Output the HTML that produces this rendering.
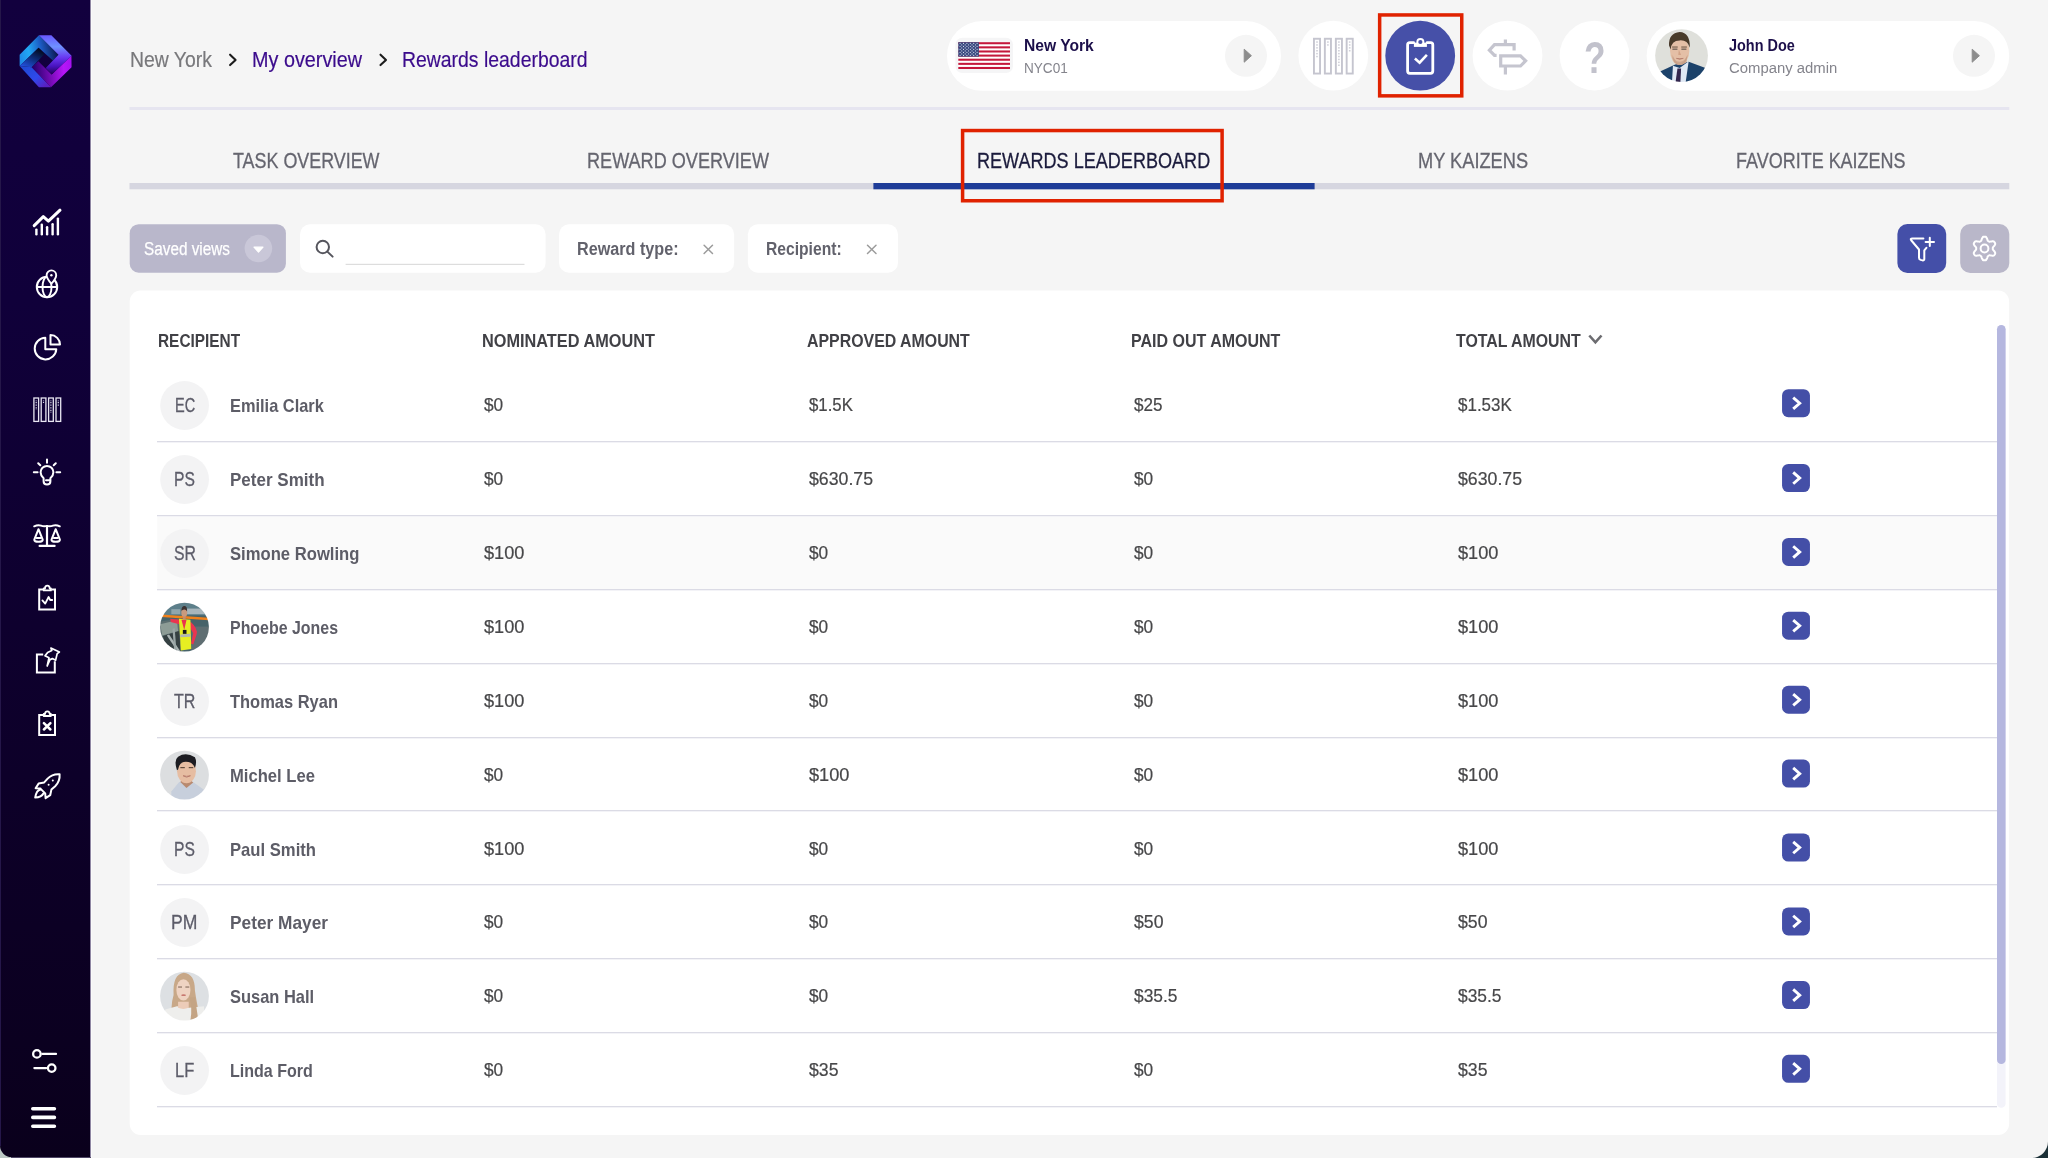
<!DOCTYPE html>
<html lang="en">
<head>
<meta charset="utf-8">
<title>Rewards leaderboard</title>
<style>
html,body{margin:0;padding:0;background:#f5f5f5;}
body{width:2048px;height:1158px;overflow:hidden;font-family:"Liberation Sans",sans-serif;}
#app{position:relative;width:2048px;height:1158px;overflow:hidden;background:#f5f5f5;}
#app div{position:absolute;box-sizing:border-box;}
.t{white-space:nowrap;line-height:1;transform-origin:0 0;}
.sep{left:157px;width:1840px;height:2px;background:linear-gradient(#dbdbe5 0,#dbdbe5 50%,#f3f3f7 50%,#f3f3f7 100%);}
svg{position:absolute;left:0;top:0;overflow:visible;}
</style>
</head>
<body>
<div id="app">
<div style="left:0.0px;top:0.0px;width:90.0px;height:1158.0px;background:linear-gradient(180deg,#12003e 0%,#10003a 26%,#0e002e 54%,#0c0024 80%,#0a001c 100%);"></div>
<svg width="2048" height="1158" viewBox="0 0 2048 1158">
<rect x="90.00" y="0.00" width="1.00" height="1158.00" fill="#8f87a3"/>
<rect x="91.00" y="0.00" width="1.00" height="1158.00" fill="#fbfbfb"/>
<rect x="0.00" y="0.00" width="1.00" height="1146.00" fill="#251749"/>
<rect x="129.50" y="107.00" width="1879.80" height="3.00" fill="#e6e5f0"/>
<rect x="947.00" y="21.00" width="334.00" height="69.80" rx="35" fill="#fff"/>
<rect x="955.40" y="37.80" width="57.60" height="35.20" rx="7" fill="#f5f5f6"/>
<circle cx="1246.00" cy="55.80" r="21.00" fill="#f5f5f5"/>
<circle cx="1333.30" cy="55.70" r="34.90" fill="#fff"/>
<circle cx="1420.20" cy="55.70" r="34.90" fill="#4650a8"/>
<circle cx="1507.50" cy="55.70" r="34.90" fill="#fff"/>
<circle cx="1594.50" cy="55.60" r="34.90" fill="#fff"/>
<rect x="1646.60" y="21.00" width="362.60" height="69.80" rx="35" fill="#fff"/>
<circle cx="1974.00" cy="55.80" r="21.00" fill="#f5f5f5"/>
<rect x="129.50" y="183.00" width="1879.80" height="6.30" fill="#d6d6e0"/>
<rect x="873.40" y="183.00" width="441.20" height="6.30" fill="#1e3c98"/>
<rect x="129.70" y="224.20" width="156.20" height="48.50" rx="9" fill="#b9b7cb"/>
<circle cx="258.40" cy="248.50" r="13.80" fill="#c9c7d8"/>
<rect x="300.00" y="224.20" width="245.60" height="48.50" rx="10" fill="#fff"/>
<rect x="345.60" y="263.80" width="178.90" height="1.10" fill="#dadada"/>
<rect x="559.00" y="224.20" width="175.10" height="48.50" rx="10" fill="#fff"/>
<rect x="747.90" y="224.20" width="150.10" height="48.50" rx="10" fill="#fff"/>
<rect x="1897.40" y="224.00" width="48.80" height="49.00" rx="10" fill="#444fa8"/>
<rect x="1960.20" y="224.00" width="49.10" height="49.00" rx="10" fill="#b9b7c9"/>
<rect x="129.70" y="290.60" width="1879.40" height="844.40" rx="11" fill="#fff"/>
<rect x="157.30" y="515.92" width="1839.70" height="73.12" fill="#fafafa"/>
<circle cx="184.60" cy="405.50" r="24.40" fill="#f3f3f4"/>
<circle cx="184.60" cy="479.50" r="24.40" fill="#f3f3f4"/>
<circle cx="184.60" cy="553.50" r="24.40" fill="#f3f3f4"/>
<circle cx="184.60" cy="701.50" r="24.40" fill="#f3f3f4"/>
<circle cx="184.60" cy="849.50" r="24.40" fill="#f3f3f4"/>
<circle cx="184.60" cy="922.50" r="24.40" fill="#f3f3f4"/>
<circle cx="184.60" cy="1070.50" r="24.40" fill="#f3f3f4"/>
<rect x="1997.00" y="325.00" width="8.60" height="782.80" rx="4.3" fill="#f3f3fa"/>
<rect x="1997.00" y="325.00" width="8.60" height="739.00" rx="4.3" fill="#b5b7df"/>
</svg>
<div class="sep" style="top:441px"></div>
<div class="sep" style="top:515px"></div>
<div class="sep" style="top:589px"></div>
<div class="sep" style="top:663px"></div>
<div class="sep" style="top:737px"></div>
<div class="sep" style="top:810px"></div>
<div class="sep" style="top:884px"></div>
<div class="sep" style="top:958px"></div>
<div class="sep" style="top:1032px"></div>
<div class="sep" style="top:1106px"></div>
<div class="t" style="left:130.3px;top:48.6px;font-size:22px;color:#78787b;-webkit-text-stroke:0.2px;transform:scaleX(0.8822);">New York</div>
<div class="t" style="left:251.8px;top:48.6px;font-size:22px;color:#3b0b8c;-webkit-text-stroke:0.2px;transform:scaleX(0.8998);">My overview</div>
<div class="t" style="left:402.0px;top:48.6px;font-size:22px;color:#3b0b8c;-webkit-text-stroke:0.2px;transform:scaleX(0.8819);">Rewards leaderboard</div>
<div class="t" style="left:1023.7px;top:36.7px;font-size:17px;color:#1c0f4a;font-weight:700;transform:scaleX(0.9196);">New York</div>
<div class="t" style="left:1023.7px;top:60.0px;font-size:15.4px;color:#84848c;transform:scaleX(0.8826);">NYC01</div>
<div class="t" style="left:1729.0px;top:36.7px;font-size:17px;color:#1c0f4a;font-weight:700;transform:scaleX(0.8495);">John Doe</div>
<div class="t" style="left:1729.0px;top:60.0px;font-size:15.4px;color:#84848c;transform:scaleX(0.9663);">Company admin</div>
<div class="t" style="left:1584.3px;top:35.8px;font-size:44px;color:#c2c2cc;font-weight:700;transform:scaleX(0.7995);">?</div>
<div class="t" style="left:233.1px;top:150.1px;font-size:22px;color:#65656f;-webkit-text-stroke:0.3px;transform:scaleX(0.8133);">TASK OVERVIEW</div>
<div class="t" style="left:587.3px;top:150.1px;font-size:22px;color:#65656f;-webkit-text-stroke:0.3px;transform:scaleX(0.8226);">REWARD OVERVIEW</div>
<div class="t" style="left:977.2px;top:150.1px;font-size:22px;color:#1b1b3c;-webkit-text-stroke:0.3px;transform:scaleX(0.8211);">REWARDS LEADERBOARD</div>
<div class="t" style="left:1418.1px;top:150.1px;font-size:22px;color:#65656f;-webkit-text-stroke:0.3px;transform:scaleX(0.8287);">MY KAIZENS</div>
<div class="t" style="left:1735.7px;top:150.1px;font-size:22px;color:#65656f;-webkit-text-stroke:0.3px;transform:scaleX(0.8177);">FAVORITE KAIZENS</div>
<div class="t" style="left:143.6px;top:240.0px;font-size:18px;color:#fff;-webkit-text-stroke:0.25px;transform:scaleX(0.8510);">Saved views</div>
<div class="t" style="left:576.9px;top:240.2px;font-size:18px;color:#62626c;font-weight:700;transform:scaleX(0.8989);">Reward type:</div>
<div class="t" style="left:765.6px;top:240.2px;font-size:18px;color:#62626c;font-weight:700;transform:scaleX(0.8688);">Recipient:</div>
<div class="t" style="left:158.4px;top:331.7px;font-size:18.4px;color:#414146;font-weight:700;transform:scaleX(0.8368);">RECIPIENT</div>
<div class="t" style="left:481.6px;top:331.7px;font-size:18.4px;color:#414146;font-weight:700;transform:scaleX(0.8861);">NOMINATED AMOUNT</div>
<div class="t" style="left:807.0px;top:331.7px;font-size:18.4px;color:#414146;font-weight:700;transform:scaleX(0.8644);">APPROVED AMOUNT</div>
<div class="t" style="left:1131.4px;top:331.7px;font-size:18.4px;color:#414146;font-weight:700;transform:scaleX(0.8704);">PAID OUT AMOUNT</div>
<div class="t" style="left:1456.3px;top:331.7px;font-size:18.4px;color:#414146;font-weight:700;transform:scaleX(0.8636);">TOTAL AMOUNT</div>
<div class="t" style="left:174.50px;top:395.0px;font-size:20.2px;color:#5c5c69;-webkit-text-stroke:0.3px;transform:scaleX(0.7194);">EC</div>
<div class="t" style="left:230.2px;top:397.0px;font-size:18.4px;color:#5d5d67;font-weight:700;transform:scaleX(0.8908);">Emilia Clark</div>
<div class="t" style="left:484.0px;top:396.0px;font-size:18.4px;color:#474749;-webkit-text-stroke:0.2px;transform:scaleX(0.9380);">$0</div>
<div class="t" style="left:808.6px;top:396.0px;font-size:18.4px;color:#474749;-webkit-text-stroke:0.2px;transform:scaleX(0.9134);">$1.5K</div>
<div class="t" style="left:1133.5px;top:396.0px;font-size:18.4px;color:#474749;-webkit-text-stroke:0.2px;transform:scaleX(0.9287);">$25</div>
<div class="t" style="left:1457.9px;top:396.0px;font-size:18.4px;color:#474749;-webkit-text-stroke:0.2px;transform:scaleX(0.9229);">$1.53K</div>
<div class="t" style="left:174.15px;top:469.0px;font-size:20.2px;color:#5c5c69;-webkit-text-stroke:0.3px;transform:scaleX(0.7750);">PS</div>
<div class="t" style="left:230.2px;top:471.0px;font-size:18.4px;color:#5d5d67;font-weight:700;transform:scaleX(0.9256);">Peter Smith</div>
<div class="t" style="left:484.0px;top:470.0px;font-size:18.4px;color:#474749;-webkit-text-stroke:0.2px;transform:scaleX(0.9380);">$0</div>
<div class="t" style="left:808.6px;top:470.0px;font-size:18.4px;color:#474749;-webkit-text-stroke:0.2px;transform:scaleX(0.9626);">$630.75</div>
<div class="t" style="left:1133.5px;top:470.0px;font-size:18.4px;color:#474749;-webkit-text-stroke:0.2px;transform:scaleX(0.9380);">$0</div>
<div class="t" style="left:1457.9px;top:470.0px;font-size:18.4px;color:#474749;-webkit-text-stroke:0.2px;transform:scaleX(0.9626);">$630.75</div>
<div class="t" style="left:173.60px;top:543.0px;font-size:20.2px;color:#5c5c69;-webkit-text-stroke:0.3px;transform:scaleX(0.7835);">SR</div>
<div class="t" style="left:230.2px;top:545.0px;font-size:18.4px;color:#5d5d67;font-weight:700;transform:scaleX(0.9046);">Simone Rowling</div>
<div class="t" style="left:484.0px;top:544.0px;font-size:18.4px;color:#474749;-webkit-text-stroke:0.2px;transform:scaleX(0.9897);">$100</div>
<div class="t" style="left:808.6px;top:544.0px;font-size:18.4px;color:#474749;-webkit-text-stroke:0.2px;transform:scaleX(0.9380);">$0</div>
<div class="t" style="left:1133.5px;top:544.0px;font-size:18.4px;color:#474749;-webkit-text-stroke:0.2px;transform:scaleX(0.9380);">$0</div>
<div class="t" style="left:1457.9px;top:544.0px;font-size:18.4px;color:#474749;-webkit-text-stroke:0.2px;transform:scaleX(0.9897);">$100</div>
<div class="t" style="left:230.2px;top:619.0px;font-size:18.4px;color:#5d5d67;font-weight:700;transform:scaleX(0.8662);">Phoebe Jones</div>
<div class="t" style="left:484.0px;top:618.0px;font-size:18.4px;color:#474749;-webkit-text-stroke:0.2px;transform:scaleX(0.9897);">$100</div>
<div class="t" style="left:808.6px;top:618.0px;font-size:18.4px;color:#474749;-webkit-text-stroke:0.2px;transform:scaleX(0.9380);">$0</div>
<div class="t" style="left:1133.5px;top:618.0px;font-size:18.4px;color:#474749;-webkit-text-stroke:0.2px;transform:scaleX(0.9380);">$0</div>
<div class="t" style="left:1457.9px;top:618.0px;font-size:18.4px;color:#474749;-webkit-text-stroke:0.2px;transform:scaleX(0.9897);">$100</div>
<div class="t" style="left:173.90px;top:691.0px;font-size:20.2px;color:#5c5c69;-webkit-text-stroke:0.3px;transform:scaleX(0.7936);">TR</div>
<div class="t" style="left:230.2px;top:693.0px;font-size:18.4px;color:#5d5d67;font-weight:700;transform:scaleX(0.8956);">Thomas Ryan</div>
<div class="t" style="left:484.0px;top:692.0px;font-size:18.4px;color:#474749;-webkit-text-stroke:0.2px;transform:scaleX(0.9897);">$100</div>
<div class="t" style="left:808.6px;top:692.0px;font-size:18.4px;color:#474749;-webkit-text-stroke:0.2px;transform:scaleX(0.9380);">$0</div>
<div class="t" style="left:1133.5px;top:692.0px;font-size:18.4px;color:#474749;-webkit-text-stroke:0.2px;transform:scaleX(0.9380);">$0</div>
<div class="t" style="left:1457.9px;top:692.0px;font-size:18.4px;color:#474749;-webkit-text-stroke:0.2px;transform:scaleX(0.9897);">$100</div>
<div class="t" style="left:230.2px;top:767.0px;font-size:18.4px;color:#5d5d67;font-weight:700;transform:scaleX(0.9029);">Michel Lee</div>
<div class="t" style="left:484.0px;top:766.0px;font-size:18.4px;color:#474749;-webkit-text-stroke:0.2px;transform:scaleX(0.9380);">$0</div>
<div class="t" style="left:808.6px;top:766.0px;font-size:18.4px;color:#474749;-webkit-text-stroke:0.2px;transform:scaleX(0.9897);">$100</div>
<div class="t" style="left:1133.5px;top:766.0px;font-size:18.4px;color:#474749;-webkit-text-stroke:0.2px;transform:scaleX(0.9380);">$0</div>
<div class="t" style="left:1457.9px;top:766.0px;font-size:18.4px;color:#474749;-webkit-text-stroke:0.2px;transform:scaleX(0.9897);">$100</div>
<div class="t" style="left:174.15px;top:839.0px;font-size:20.2px;color:#5c5c69;-webkit-text-stroke:0.3px;transform:scaleX(0.7750);">PS</div>
<div class="t" style="left:230.2px;top:841.0px;font-size:18.4px;color:#5d5d67;font-weight:700;transform:scaleX(0.9048);">Paul Smith</div>
<div class="t" style="left:484.0px;top:840.0px;font-size:18.4px;color:#474749;-webkit-text-stroke:0.2px;transform:scaleX(0.9897);">$100</div>
<div class="t" style="left:808.6px;top:840.0px;font-size:18.4px;color:#474749;-webkit-text-stroke:0.2px;transform:scaleX(0.9380);">$0</div>
<div class="t" style="left:1133.5px;top:840.0px;font-size:18.4px;color:#474749;-webkit-text-stroke:0.2px;transform:scaleX(0.9380);">$0</div>
<div class="t" style="left:1457.9px;top:840.0px;font-size:18.4px;color:#474749;-webkit-text-stroke:0.2px;transform:scaleX(0.9897);">$100</div>
<div class="t" style="left:171.40px;top:912.0px;font-size:20.2px;color:#5c5c69;-webkit-text-stroke:0.3px;transform:scaleX(0.8713);">PM</div>
<div class="t" style="left:230.2px;top:914.0px;font-size:18.4px;color:#5d5d67;font-weight:700;transform:scaleX(0.9398);">Peter Mayer</div>
<div class="t" style="left:484.0px;top:913.0px;font-size:18.4px;color:#474749;-webkit-text-stroke:0.2px;transform:scaleX(0.9380);">$0</div>
<div class="t" style="left:808.6px;top:913.0px;font-size:18.4px;color:#474749;-webkit-text-stroke:0.2px;transform:scaleX(0.9380);">$0</div>
<div class="t" style="left:1133.5px;top:913.0px;font-size:18.4px;color:#474749;-webkit-text-stroke:0.2px;transform:scaleX(0.9613);">$50</div>
<div class="t" style="left:1457.9px;top:913.0px;font-size:18.4px;color:#474749;-webkit-text-stroke:0.2px;transform:scaleX(0.9613);">$50</div>
<div class="t" style="left:230.2px;top:988.0px;font-size:18.4px;color:#5d5d67;font-weight:700;transform:scaleX(0.8944);">Susan Hall</div>
<div class="t" style="left:484.0px;top:987.0px;font-size:18.4px;color:#474749;-webkit-text-stroke:0.2px;transform:scaleX(0.9380);">$0</div>
<div class="t" style="left:808.6px;top:987.0px;font-size:18.4px;color:#474749;-webkit-text-stroke:0.2px;transform:scaleX(0.9380);">$0</div>
<div class="t" style="left:1133.5px;top:987.0px;font-size:18.4px;color:#474749;-webkit-text-stroke:0.2px;transform:scaleX(0.9450);">$35.5</div>
<div class="t" style="left:1457.9px;top:987.0px;font-size:18.4px;color:#474749;-webkit-text-stroke:0.2px;transform:scaleX(0.9450);">$35.5</div>
<div class="t" style="left:175.00px;top:1060.0px;font-size:20.2px;color:#5c5c69;-webkit-text-stroke:0.3px;transform:scaleX(0.8159);">LF</div>
<div class="t" style="left:230.2px;top:1062.0px;font-size:18.4px;color:#5d5d67;font-weight:700;transform:scaleX(0.8725);">Linda Ford</div>
<div class="t" style="left:484.0px;top:1061.0px;font-size:18.4px;color:#474749;-webkit-text-stroke:0.2px;transform:scaleX(0.9380);">$0</div>
<div class="t" style="left:808.6px;top:1061.0px;font-size:18.4px;color:#474749;-webkit-text-stroke:0.2px;transform:scaleX(0.9613);">$35</div>
<div class="t" style="left:1133.5px;top:1061.0px;font-size:18.4px;color:#474749;-webkit-text-stroke:0.2px;transform:scaleX(0.9380);">$0</div>
<div class="t" style="left:1457.9px;top:1061.0px;font-size:18.4px;color:#474749;-webkit-text-stroke:0.2px;transform:scaleX(0.9613);">$35</div>
<svg width="2048" height="1158" viewBox="0 0 2048 1158">
<defs>
<linearGradient id="g1" gradientUnits="userSpaceOnUse" x1="155" y1="600" x2="780" y2="470"><stop offset="0" stop-color="#1e86e6"/><stop offset=".28" stop-color="#22a8f4"/><stop offset=".6" stop-color="#1c5cc4"/><stop offset="1" stop-color="#0a1248"/></linearGradient>
<linearGradient id="g2" gradientUnits="userSpaceOnUse" x1="470" y1="370" x2="300" y2="700"><stop offset="0" stop-color="#010614"/><stop offset=".55" stop-color="#0e2e7e"/><stop offset="1" stop-color="#204ed6"/></linearGradient>
<linearGradient id="g3" gradientUnits="userSpaceOnUse" x1="250" y1="660" x2="560" y2="1000"><stop offset="0" stop-color="#1f4ad4"/><stop offset=".55" stop-color="#3049ec"/><stop offset="1" stop-color="#5a1fc0"/></linearGradient>
<linearGradient id="g4" gradientUnits="userSpaceOnUse" x1="380" y1="690" x2="990" y2="620"><stop offset="0" stop-color="#2a0070"/><stop offset=".45" stop-color="#7d0cbc"/><stop offset=".78" stop-color="#b716f8"/><stop offset="1" stop-color="#a512f0"/></linearGradient>
<linearGradient id="g5" gradientUnits="userSpaceOnUse" x1="640" y1="165" x2="660" y2="790"><stop offset="0" stop-color="#6858ff"/><stop offset=".3" stop-color="#6f92ff"/><stop offset=".58" stop-color="#6a38f2"/><stop offset=".8" stop-color="#4812be"/><stop offset="1" stop-color="#230058"/></linearGradient>
</defs>
<g transform="translate(10 25) scale(0.062177)">
<polygon points="155,480 465,165 780,480 690,570 460,365 155,660" fill="url(#g1)"/>
<polygon points="155,660 460,365 555,465 350,680" fill="url(#g2)"/>
<polygon points="155,660 350,680 660,1000 465,1000" fill="url(#g3)"/>
<polygon points="350,680 455,585 670,795 988,495 990,680 660,1000" fill="url(#g4)"/>
<polygon points="465,165 665,165 990,495 670,795 575,690 780,480" fill="url(#g5)"/>
</g>
<path d="M230.1 54.7L235.6 59.9L230.1 65.1" fill="none" stroke="#1c1c1c" stroke-width="2.1" stroke-linecap="round" stroke-linejoin="round"/>
<path d="M380.5 54.7L386 59.9L380.5 65.1" fill="none" stroke="#1c1c1c" stroke-width="2.1" stroke-linecap="round" stroke-linejoin="round"/>
<g><rect x="958.3" y="42.2" width="51.7" height="26.8" fill="#fff"/><rect x="958.3" y="42.20" width="51.7" height="2.06" fill="#c4183c"/><rect x="958.3" y="46.32" width="51.7" height="2.06" fill="#c4183c"/><rect x="958.3" y="50.45" width="51.7" height="2.06" fill="#c4183c"/><rect x="958.3" y="54.57" width="51.7" height="2.06" fill="#c4183c"/><rect x="958.3" y="58.69" width="51.7" height="2.06" fill="#c4183c"/><rect x="958.3" y="62.82" width="51.7" height="2.06" fill="#c4183c"/><rect x="958.3" y="66.94" width="51.7" height="2.06" fill="#c4183c"/><rect x="958.3" y="42.2" width="20.6" height="14.43" fill="#3a4a80"/><circle cx="960.10" cy="43.40" r="0.55" fill="#d5dbea"/><circle cx="963.50" cy="43.40" r="0.55" fill="#d5dbea"/><circle cx="966.90" cy="43.40" r="0.55" fill="#d5dbea"/><circle cx="970.30" cy="43.40" r="0.55" fill="#d5dbea"/><circle cx="973.70" cy="43.40" r="0.55" fill="#d5dbea"/><circle cx="977.10" cy="43.40" r="0.55" fill="#d5dbea"/><circle cx="961.80" cy="44.90" r="0.55" fill="#d5dbea"/><circle cx="965.20" cy="44.90" r="0.55" fill="#d5dbea"/><circle cx="968.60" cy="44.90" r="0.55" fill="#d5dbea"/><circle cx="972.00" cy="44.90" r="0.55" fill="#d5dbea"/><circle cx="975.40" cy="44.90" r="0.55" fill="#d5dbea"/><circle cx="960.10" cy="46.40" r="0.55" fill="#d5dbea"/><circle cx="963.50" cy="46.40" r="0.55" fill="#d5dbea"/><circle cx="966.90" cy="46.40" r="0.55" fill="#d5dbea"/><circle cx="970.30" cy="46.40" r="0.55" fill="#d5dbea"/><circle cx="973.70" cy="46.40" r="0.55" fill="#d5dbea"/><circle cx="977.10" cy="46.40" r="0.55" fill="#d5dbea"/><circle cx="961.80" cy="47.90" r="0.55" fill="#d5dbea"/><circle cx="965.20" cy="47.90" r="0.55" fill="#d5dbea"/><circle cx="968.60" cy="47.90" r="0.55" fill="#d5dbea"/><circle cx="972.00" cy="47.90" r="0.55" fill="#d5dbea"/><circle cx="975.40" cy="47.90" r="0.55" fill="#d5dbea"/><circle cx="960.10" cy="49.40" r="0.55" fill="#d5dbea"/><circle cx="963.50" cy="49.40" r="0.55" fill="#d5dbea"/><circle cx="966.90" cy="49.40" r="0.55" fill="#d5dbea"/><circle cx="970.30" cy="49.40" r="0.55" fill="#d5dbea"/><circle cx="973.70" cy="49.40" r="0.55" fill="#d5dbea"/><circle cx="977.10" cy="49.40" r="0.55" fill="#d5dbea"/><circle cx="961.80" cy="50.90" r="0.55" fill="#d5dbea"/><circle cx="965.20" cy="50.90" r="0.55" fill="#d5dbea"/><circle cx="968.60" cy="50.90" r="0.55" fill="#d5dbea"/><circle cx="972.00" cy="50.90" r="0.55" fill="#d5dbea"/><circle cx="975.40" cy="50.90" r="0.55" fill="#d5dbea"/><circle cx="960.10" cy="52.40" r="0.55" fill="#d5dbea"/><circle cx="963.50" cy="52.40" r="0.55" fill="#d5dbea"/><circle cx="966.90" cy="52.40" r="0.55" fill="#d5dbea"/><circle cx="970.30" cy="52.40" r="0.55" fill="#d5dbea"/><circle cx="973.70" cy="52.40" r="0.55" fill="#d5dbea"/><circle cx="977.10" cy="52.40" r="0.55" fill="#d5dbea"/><circle cx="961.80" cy="53.90" r="0.55" fill="#d5dbea"/><circle cx="965.20" cy="53.90" r="0.55" fill="#d5dbea"/><circle cx="968.60" cy="53.90" r="0.55" fill="#d5dbea"/><circle cx="972.00" cy="53.90" r="0.55" fill="#d5dbea"/><circle cx="975.40" cy="53.90" r="0.55" fill="#d5dbea"/><circle cx="960.10" cy="55.40" r="0.55" fill="#d5dbea"/><circle cx="963.50" cy="55.40" r="0.55" fill="#d5dbea"/><circle cx="966.90" cy="55.40" r="0.55" fill="#d5dbea"/><circle cx="970.30" cy="55.40" r="0.55" fill="#d5dbea"/><circle cx="973.70" cy="55.40" r="0.55" fill="#d5dbea"/><circle cx="977.10" cy="55.40" r="0.55" fill="#d5dbea"/></g>
<path d="M1244.2 49.2L1251.4 55.7L1244.2 62.2Z" fill="#8d8d8d" stroke="#8d8d8d" stroke-width="1" stroke-linejoin="round"/>
<path d="M1972.2 49.2L1979.4 55.7L1972.2 62.2Z" fill="#8d8d8d" stroke="#8d8d8d" stroke-width="1" stroke-linejoin="round"/>
<rect x="1313.95" y="38.75" width="6.1" height="34.8" fill="none" stroke="#c5c5cf" stroke-width="1.9"/>
<rect x="1324.85" y="38.75" width="6.1" height="34.8" fill="none" stroke="#c5c5cf" stroke-width="1.9"/>
<rect x="1335.85" y="38.75" width="6.1" height="34.8" fill="none" stroke="#c5c5cf" stroke-width="1.9"/>
<rect x="1346.65" y="38.75" width="6.1" height="34.8" fill="none" stroke="#c5c5cf" stroke-width="1.9"/>
<rect x="1316.20" y="41.30" width="1.6" height="1.5" fill="#cfcfd8"/>
<rect x="1316.20" y="44.20" width="1.6" height="1.5" fill="#cfcfd8"/>
<rect x="1316.20" y="47.10" width="1.6" height="1.5" fill="#cfcfd8"/>
<rect x="1316.20" y="50.00" width="1.6" height="1.5" fill="#cfcfd8"/>
<rect x="1316.20" y="52.90" width="1.6" height="1.5" fill="#cfcfd8"/>
<rect x="1316.20" y="55.80" width="1.6" height="1.5" fill="#cfcfd8"/>
<rect x="1327.10" y="41.30" width="1.6" height="1.5" fill="#cfcfd8"/>
<rect x="1327.10" y="44.20" width="1.6" height="1.5" fill="#cfcfd8"/>
<rect x="1338.10" y="41.30" width="1.6" height="1.5" fill="#cfcfd8"/>
<rect x="1338.10" y="44.20" width="1.6" height="1.5" fill="#cfcfd8"/>
<rect x="1338.10" y="47.10" width="1.6" height="1.5" fill="#cfcfd8"/>
<rect x="1338.10" y="50.00" width="1.6" height="1.5" fill="#cfcfd8"/>
<rect x="1338.10" y="52.90" width="1.6" height="1.5" fill="#cfcfd8"/>
<rect x="1338.10" y="55.80" width="1.6" height="1.5" fill="#cfcfd8"/>
<rect x="1338.10" y="58.70" width="1.6" height="1.5" fill="#cfcfd8"/>
<rect x="1338.10" y="61.60" width="1.6" height="1.5" fill="#cfcfd8"/>
<rect x="1338.10" y="64.50" width="1.6" height="1.5" fill="#cfcfd8"/>
<rect x="1348.90" y="41.30" width="1.6" height="1.5" fill="#cfcfd8"/>
<rect x="1348.90" y="44.20" width="1.6" height="1.5" fill="#cfcfd8"/>
<rect x="1348.90" y="47.10" width="1.6" height="1.5" fill="#cfcfd8"/>
<rect x="1348.90" y="50.00" width="1.6" height="1.5" fill="#cfcfd8"/>
<path d="M1413.6 42.6H1409.8Q1407.6 42.6 1407.6 44.8V71.1Q1407.6 73.3 1409.8 73.3H1430.6Q1432.8 73.3 1432.8 71.1V44.8Q1432.8 42.6 1430.6 42.6H1427.2" fill="none" stroke="#fff" stroke-width="2.8" stroke-linecap="round" stroke-linejoin="round"/>
<rect x="1413.9" y="42.6" width="13" height="4.3" fill="#fff"/>
<circle cx="1420.35" cy="42" r="4" fill="#fff"/>
<circle cx="1420.35" cy="42" r="2.1" fill="#4650a8"/>
<path d="M1414.9 58.6L1419.6 62.7L1426.9 54.9" fill="none" stroke="#fff" stroke-width="2.6" stroke-linecap="butt" stroke-linejoin="miter"/>
<path d="M1505.4 39.4V43.6 M1514.1 50.6V44.6H1494.5L1489.4 50.2L1494.5 55.3H1496.6 M1500.7 55.9H1520.5L1525.6 60.8L1520.5 66H1500.7Z M1505.4 67.6V74.6" fill="none" stroke="#c5c5cf" stroke-width="3.2" stroke-linecap="butt" stroke-linejoin="miter"/>
<path d="M254 247.2H263L258.5 252Z" fill="#fff" stroke="#fff" stroke-width="1.2" stroke-linejoin="round"/>
<circle cx="322.8" cy="247" r="6.2" fill="none" stroke="#55555d" stroke-width="2"/>
<path d="M327.4 251.6L332.6 256.6" fill="none" stroke="#55555d" stroke-width="2" stroke-linecap="round" stroke-linejoin="round"/>
<path d="M704.1 245.3L712.5 253.5M712.5 245.3L704.1 253.5" fill="none" stroke="#9b9b9b" stroke-width="1.5" stroke-linecap="round" stroke-linejoin="round"/>
<path d="M867.5 245.3L876 253.5M876 245.3L867.5 253.5" fill="none" stroke="#9b9b9b" stroke-width="1.5" stroke-linecap="round" stroke-linejoin="round"/>
<path d="M1923.4 238.4H1912.4Q1909.8 238.4 1911.4 240.5L1919 249.5V257.8Q1919 259.4 1920.6 259.9L1922.6 260.4Q1924.3 260.6 1924.3 258.9V250.4L1926.4 247.8" fill="none" stroke="#fff" stroke-width="2" stroke-linecap="round" stroke-linejoin="round"/>
<path d="M1925.6 241.9H1934 M1929.8 237.8V246.1" fill="none" stroke="#fff" stroke-width="2" stroke-linecap="round" stroke-linejoin="round"/>
<path d="M1984.50 236.70L1985.01 236.71L1985.53 236.74L1986.01 237.00L1986.44 237.53L1986.80 238.14L1987.10 238.79L1987.35 239.46L1987.56 240.08L1987.75 240.64L1988.01 240.98L1988.33 241.14L1988.65 241.31L1988.96 241.50L1989.26 241.70L1989.68 241.75L1990.26 241.64L1990.91 241.51L1991.61 241.39L1992.33 241.33L1993.04 241.34L1993.70 241.44L1994.17 241.73L1994.45 242.16L1994.72 242.60L1994.97 243.05L1995.19 243.51L1995.21 244.06L1994.97 244.69L1994.62 245.31L1994.21 245.90L1993.76 246.45L1993.32 246.94L1992.93 247.39L1992.77 247.78L1992.79 248.14L1992.80 248.50L1992.79 248.86L1992.77 249.22L1992.93 249.61L1993.32 250.06L1993.76 250.55L1994.21 251.10L1994.62 251.69L1994.97 252.31L1995.21 252.94L1995.19 253.49L1994.97 253.95L1994.72 254.40L1994.45 254.84L1994.17 255.27L1993.70 255.56L1993.04 255.66L1992.33 255.67L1991.61 255.61L1990.91 255.49L1990.26 255.36L1989.68 255.25L1989.26 255.30L1988.96 255.50L1988.65 255.69L1988.33 255.86L1988.01 256.02L1987.75 256.36L1987.56 256.92L1987.35 257.54L1987.10 258.21L1986.80 258.86L1986.44 259.47L1986.01 260.00L1985.53 260.26L1985.01 260.29L1984.50 260.30L1983.99 260.29L1983.47 260.26L1982.99 260.00L1982.56 259.47L1982.20 258.86L1981.90 258.21L1981.65 257.54L1981.44 256.92L1981.25 256.36L1980.99 256.02L1980.67 255.86L1980.35 255.69L1980.04 255.50L1979.74 255.30L1979.32 255.25L1978.74 255.36L1978.09 255.49L1977.39 255.61L1976.67 255.67L1975.96 255.66L1975.30 255.56L1974.83 255.27L1974.55 254.84L1974.28 254.40L1974.03 253.95L1973.81 253.49L1973.79 252.94L1974.03 252.31L1974.38 251.69L1974.79 251.10L1975.24 250.55L1975.68 250.06L1976.07 249.61L1976.23 249.22L1976.21 248.86L1976.20 248.50L1976.21 248.14L1976.23 247.78L1976.07 247.39L1975.68 246.94L1975.24 246.45L1974.79 245.90L1974.38 245.31L1974.03 244.69L1973.79 244.06L1973.81 243.51L1974.03 243.05L1974.28 242.60L1974.55 242.16L1974.83 241.73L1975.30 241.44L1975.96 241.34L1976.67 241.33L1977.39 241.39L1978.09 241.51L1978.74 241.64L1979.32 241.75L1979.74 241.70L1980.04 241.50L1980.35 241.31L1980.67 241.14L1980.99 240.98L1981.25 240.64L1981.44 240.08L1981.65 239.46L1981.90 238.79L1982.20 238.14L1982.56 237.53L1982.99 237.00L1983.47 236.74L1983.99 236.71Z" fill="none" stroke="#fff" stroke-width="2" stroke-linecap="round" stroke-linejoin="round"/>
<circle cx="1984.5" cy="248.5" r="3.9" fill="none" stroke="#fff" stroke-width="2"/>
<path d="M1589.3 335.5L1595.4 342.3L1601.5 335.5" fill="none" stroke="#6c6c70" stroke-width="2.6" stroke-linecap="butt" stroke-linejoin="miter"/>
<rect x="1782.05" y="389.2" width="27.9" height="28" rx="6.3" fill="#444fa7"/>
<path d="M1793.2 397.55L1799.7 403.25L1793.2 408.95" fill="none" stroke="#fff" stroke-width="2.9" stroke-linecap="butt" stroke-linejoin="miter"/>
<rect x="1782.05" y="464.0" width="27.9" height="28" rx="6.3" fill="#444fa7"/>
<path d="M1793.2 472.35L1799.7 478.05L1793.2 483.75" fill="none" stroke="#fff" stroke-width="2.9" stroke-linecap="butt" stroke-linejoin="miter"/>
<rect x="1782.05" y="537.9" width="27.9" height="28" rx="6.3" fill="#444fa7"/>
<path d="M1793.2 546.25L1799.7 551.95L1793.2 557.65" fill="none" stroke="#fff" stroke-width="2.9" stroke-linecap="butt" stroke-linejoin="miter"/>
<rect x="1782.05" y="611.7" width="27.9" height="28" rx="6.3" fill="#444fa7"/>
<path d="M1793.2 620.05L1799.7 625.75L1793.2 631.45" fill="none" stroke="#fff" stroke-width="2.9" stroke-linecap="butt" stroke-linejoin="miter"/>
<rect x="1782.05" y="685.7" width="27.9" height="28" rx="6.3" fill="#444fa7"/>
<path d="M1793.2 694.05L1799.7 699.75L1793.2 705.45" fill="none" stroke="#fff" stroke-width="2.9" stroke-linecap="butt" stroke-linejoin="miter"/>
<rect x="1782.05" y="759.6" width="27.9" height="28" rx="6.3" fill="#444fa7"/>
<path d="M1793.2 767.95L1799.7 773.65L1793.2 779.35" fill="none" stroke="#fff" stroke-width="2.9" stroke-linecap="butt" stroke-linejoin="miter"/>
<rect x="1782.05" y="833.5" width="27.9" height="28" rx="6.3" fill="#444fa7"/>
<path d="M1793.2 841.85L1799.7 847.55L1793.2 853.25" fill="none" stroke="#fff" stroke-width="2.9" stroke-linecap="butt" stroke-linejoin="miter"/>
<rect x="1782.05" y="907.4" width="27.9" height="28" rx="6.3" fill="#444fa7"/>
<path d="M1793.2 915.75L1799.7 921.45L1793.2 927.15" fill="none" stroke="#fff" stroke-width="2.9" stroke-linecap="butt" stroke-linejoin="miter"/>
<rect x="1782.05" y="981.1" width="27.9" height="28" rx="6.3" fill="#444fa7"/>
<path d="M1793.2 989.45L1799.7 995.15L1793.2 1000.85" fill="none" stroke="#fff" stroke-width="2.9" stroke-linecap="butt" stroke-linejoin="miter"/>
<rect x="1782.05" y="1054.8" width="27.9" height="28" rx="6.3" fill="#444fa7"/>
<path d="M1793.2 1063.15L1799.7 1068.85L1793.2 1074.55" fill="none" stroke="#fff" stroke-width="2.9" stroke-linecap="butt" stroke-linejoin="miter"/>
<path d="M36.4 229.6V234.2" fill="none" stroke="#fff" stroke-width="2.4" stroke-linecap="round" stroke-linejoin="round"/>
<path d="M41.8 224.6V234.2" fill="none" stroke="#fff" stroke-width="2.4" stroke-linecap="round" stroke-linejoin="round"/>
<path d="M47.1 227.2V234.2" fill="none" stroke="#fff" stroke-width="2.4" stroke-linecap="round" stroke-linejoin="round"/>
<path d="M52.6 224.2V234.2" fill="none" stroke="#fff" stroke-width="2.4" stroke-linecap="round" stroke-linejoin="round"/>
<path d="M57.9 218.6V234.2" fill="none" stroke="#fff" stroke-width="2.4" stroke-linecap="round" stroke-linejoin="round"/>
<path d="M34.2 225.6L43.3 216.6L48.4 221.2L60 210.2" fill="none" stroke="#fff" stroke-width="3" stroke-linecap="round" stroke-linejoin="round"/>
<circle cx="47" cy="287" r="10.2" fill="none" stroke="#fff" stroke-width="2"/>
<path d="M37 287H57" fill="none" stroke="#fff" stroke-width="1.9" stroke-linecap="round" stroke-linejoin="round"/>
<ellipse cx="47" cy="287" rx="4.5" ry="10.2" fill="none" stroke="#fff" stroke-width="1.9"/>
<path d="M51.4 283.6Q46.6 278.4 46.6 275.2A4.8 4.8 0 0 1 56.2 275.2Q56.2 278.4 51.4 283.6Z" fill="#13003b" stroke="#fff" stroke-width="1.9" stroke-linejoin="round"/>
<circle cx="51.4" cy="275.3" r="1.2" fill="#fff"/>
<path d="M45.3 337.8V349.3H56.3A10.8 10.8 0 1 1 45.3 337.8Z" fill="none" stroke="#fff" stroke-width="2" stroke-linecap="round" stroke-linejoin="round"/>
<path d="M50.5 335.1A9.5 9.5 0 0 1 60 344.6H50.5Z" fill="none" stroke="#fff" stroke-width="2" stroke-linecap="round" stroke-linejoin="round"/>
<rect x="33.9" y="398" width="4.7" height="23.4" fill="none" stroke="#e9e6f2" stroke-width="1.3"/>
<rect x="41.2" y="398" width="4.7" height="23.4" fill="none" stroke="#e9e6f2" stroke-width="1.3"/>
<rect x="48.6" y="398" width="4.7" height="23.4" fill="none" stroke="#e9e6f2" stroke-width="1.3"/>
<rect x="56" y="398" width="4.7" height="23.4" fill="none" stroke="#e9e6f2" stroke-width="1.3"/>
<path d="M36.2 400.5V410.1" stroke="#d8d4e6" stroke-width="1.2" stroke-dasharray="0.8 0.8" fill="none"/>
<path d="M43.5 400.5V403.7" stroke="#d8d4e6" stroke-width="1.2" stroke-dasharray="0.8 0.8" fill="none"/>
<path d="M50.9 400.5V413.3" stroke="#d8d4e6" stroke-width="1.2" stroke-dasharray="0.8 0.8" fill="none"/>
<path d="M58.3 400.5V406.9" stroke="#d8d4e6" stroke-width="1.2" stroke-dasharray="0.8 0.8" fill="none"/>
<path d="M47 459.6V462.8 M38.2 463.2L40.3 465.3 M55.8 463.2L53.7 465.3 M33.8 472.3H37.6 M56.4 472.3H60.2" fill="none" stroke="#fff" stroke-width="2" stroke-linecap="round" stroke-linejoin="round"/>
<path d="M43.6 478.3Q40.6 475.6 40.6 472.3A6.4 6.4 0 0 1 53.4 472.3Q53.4 475.6 50.4 478.3V481.3Q50.4 484.6 47 484.6Q43.6 484.6 43.6 481.3Z M46 480.2H50" fill="none" stroke="#fff" stroke-width="2" stroke-linecap="round" stroke-linejoin="round"/>
<path d="M34.2 526.3Q38 524.4 41 525.6Q44 526.9 47 525.9Q50 526.9 53 525.6Q56 524.4 59.8 526.3" fill="none" stroke="#fff" stroke-width="2" stroke-linecap="round" stroke-linejoin="round"/>
<path d="M47 526V545.6 M39.6 545.9H54.6" fill="none" stroke="#fff" stroke-width="2.2" stroke-linecap="round" stroke-linejoin="round"/>
<path d="M38.5 529.2L34.3 539.6Q34 541.8 38.5 541.8Q43 541.8 42.7 539.6Z M55.7 529.2L51.5 539.6Q51.2 541.8 55.7 541.8Q60.2 541.8 59.9 539.6Z" fill="none" stroke="#fff" stroke-width="2" stroke-linecap="round" stroke-linejoin="round"/>
<path d="M36.6 538H40.6 M53.8 538H57.8" fill="none" stroke="#fff" stroke-width="1.8" stroke-linecap="round" stroke-linejoin="round"/>
<path d="M43.2 589.5H39.2V609.5H55V589.5H51.2" fill="none" stroke="#fff" stroke-width="2" stroke-linecap="butt" stroke-linejoin="miter"/>
<path d="M43.7 590.4V588.4H45A2.35 2.7 0 0 1 49.7 588.4H50.9V590.4Z" fill="none" stroke="#fff" stroke-width="1.8" stroke-linecap="round" stroke-linejoin="round"/>
<path d="M42.4 600.4L45.2 603.6L48.6 597L50.2 600H52.2" fill="none" stroke="#fff" stroke-width="1.8" stroke-linecap="round" stroke-linejoin="round"/>
<path d="M43.2 654.6H36.9V672.6H54.8V661.2" fill="none" stroke="#fff" stroke-width="2" stroke-linecap="butt" stroke-linejoin="miter"/>
<path d="M50.9 648L59.4 652L57.2 653.6L55.6 660.2L52.4 658.6L50 659.6L47.2 666 L49 657.8L45 655.8L47.6 652.6L51.8 650.6Z" fill="none" stroke="#fff" stroke-width="1.7" stroke-linecap="round" stroke-linejoin="round"/>
<path d="M43.2 715.1H39.2V735.1H55V715.1H51.2" fill="none" stroke="#fff" stroke-width="2" stroke-linecap="butt" stroke-linejoin="miter"/>
<path d="M43.7 716.0V714.0H45A2.35 2.7 0 0 1 49.7 714.0H50.9V716.0Z" fill="none" stroke="#fff" stroke-width="1.8" stroke-linecap="round" stroke-linejoin="round"/>
<path d="M43.9 723.2L50.4 729.5M50.4 723.2L43.9 729.5" fill="none" stroke="#fff" stroke-width="2.5" stroke-linecap="round" stroke-linejoin="round"/>
<path d="M59.6 774.2Q52.4 773.6 47.6 778.6L44.2 782.4L38.6 783.6L35.6 788.2L40.4 788.6 M59.6 774.2Q60.2 781.4 55.2 786.2L51.4 789.6L50.2 795.2L45.6 798.2L45.2 793.4 L40.4 788.6" fill="none" stroke="#fff" stroke-width="2" stroke-linecap="round" stroke-linejoin="round"/>
<path d="M40.6 789.4Q36.4 790 35.2 797.6Q41.4 797.4 43.6 793.2" fill="none" stroke="#fff" stroke-width="2" stroke-linecap="round" stroke-linejoin="round"/>
<circle cx="52.8" cy="780.6" r="1" fill="#fff"/><circle cx="48.6" cy="784.8" r="1" fill="#fff"/>
<circle cx="36.9" cy="1053.9" r="3.75" fill="none" stroke="#fff" stroke-width="2.3"/><circle cx="51.7" cy="1068.1" r="3.75" fill="none" stroke="#fff" stroke-width="2.3"/>
<path d="M42.4 1053.9H56 M34.4 1068.1H46.2" fill="none" stroke="#fff" stroke-width="2.3" stroke-linecap="round" stroke-linejoin="round"/>
<path d="M32.8 1108.8H54.4 M32.8 1117.4H54.4 M32.8 1126.2H54.4" fill="none" stroke="#fff" stroke-width="3.6" stroke-linecap="round" stroke-linejoin="round"/>
<defs><filter id="bl" x="-10%" y="-10%" width="120%" height="120%"><feGaussianBlur stdDeviation="0.55"/></filter></defs>
<clipPath id="cjd"><circle cx="1681.55" cy="55.6" r="26.4"/></clipPath>
<g clip-path="url(#cjd)"><g filter="url(#bl)"><g transform="translate(1646 23) scale(0.05615)">
<rect x="100" y="50" width="1100" height="1100" fill="#dfe0db"/>
<path d="M240 870L520 740L760 690L1060 800L1120 1100H200Z" fill="#1f426b"/>
<path d="M480 760L600 800L760 680L700 1100H460Z" fill="#dfe8f4"/>
<path d="M560 810H625L610 1100H520Z" fill="#33264d"/>
<ellipse cx="600" cy="500" rx="172" ry="250" fill="#e4bfa6"/>
<path d="M470 560Q600 900 740 560L720 700Q600 800 500 700Z" fill="#d4ab90"/>
<path d="M410 400Q400 180 600 160Q790 170 780 440Q740 300 600 310Q450 310 440 470Z" fill="#4a3a2c"/>
<rect x="470" y="455" width="90" height="22" fill="#6a5a50"/><rect x="630" y="455" width="90" height="22" fill="#6a5a50"/>
<rect x="465" y="420" width="100" height="16" fill="#5a4636"/><rect x="628" y="420" width="100" height="16" fill="#5a4636"/>
<path d="M585 470L575 570H625Z" fill="#d3a488"/>
<path d="M540 630Q600 660 665 630Q600 645 540 630Z" fill="#b07868" stroke="#b07868" stroke-width="10"/>
<path d="M455 560Q480 740 600 750Q720 740 745 560Q700 680 600 690Q500 680 455 560Z" fill="#c09880" opacity=".6"/>
</g></g></g>
<clipPath id="cml"><circle cx="184.5" cy="775.1" r="24.4"/></clipPath>
<g clip-path="url(#cml)"><g filter="url(#bl)"><g transform="translate(150 743.2) scale(0.05615)">
<rect x="100" y="50" width="1100" height="1100" fill="#dcdee0"/>
<path d="M380 860L520 690L780 700L960 830L1000 1100H380Z" fill="#c7cfdc"/>
<path d="M540 690L650 800L770 700L700 640H580Z" fill="#b88a70"/>
<ellipse cx="650" cy="500" rx="168" ry="215" fill="#e6bda2"/>
<path d="M480 480Q420 300 500 240Q640 150 800 250Q840 330 800 440Q760 330 640 330Q520 330 500 470Z" fill="#1d1d20"/>
<rect x="540" y="425" width="80" height="20" fill="#5a4438"/><rect x="690" y="425" width="80" height="20" fill="#5a4438"/>
<path d="M590 580Q650 630 720 580Q650 600 590 580Z" fill="#f4e6e0" stroke="#b07060" stroke-width="14"/>
</g></g></g>
<clipPath id="csh"><circle cx="184.5" cy="996.1" r="24.4"/></clipPath>
<g clip-path="url(#csh)"><g filter="url(#bl)"><g transform="translate(150 963.5) scale(0.05615)">
<rect x="100" y="50" width="1100" height="1100" fill="#dde0e3"/>
<path d="M600 165Q800 180 800 480Q830 700 900 1000H400Q360 760 420 560Q400 190 600 165Z" fill="#c8a888"/>
<path d="M270 820L480 760L700 790L960 760L1000 1100H250Z" fill="#eeeeec"/>
<path d="M700 600Q760 800 720 1000H860Q830 800 800 600Z" fill="#c4a484"/>
<ellipse cx="595" cy="470" rx="125" ry="190" fill="#efd3c2"/>
<path d="M500 680H690V790Q590 830 500 790Z" fill="#ecccb8"/>
<rect x="500" y="410" width="70" height="18" fill="#7a6254"/><rect x="630" y="410" width="70" height="18" fill="#7a6254"/>
<ellipse cx="598" cy="565" rx="42" ry="16" fill="#c87870"/>
</g></g></g>
<clipPath id="cpj"><circle cx="184.5" cy="627.1" r="24.4"/></clipPath>
<g clip-path="url(#cpj)"><g filter="url(#bl)"><g transform="translate(150 595.1) scale(0.05615)">
<rect x="100" y="50" width="1100" height="1100" fill="#47636b"/>
<rect x="100" y="100" width="1100" height="260" fill="#5d7f8a"/>
<rect x="660" y="240" width="340" height="100" fill="#a8b6bc"/>
<rect x="380" y="250" width="160" height="90" fill="#8fa6ad"/>
<path d="M100 480L520 420L560 1100H100Z" fill="#5c6e70"/>
<path d="M180 520L480 450L500 640L220 720Z" fill="#8d9c96"/>
<path d="M230 730L520 640L550 1100H330Z" fill="#343f42"/>
<path d="M300 720L340 700L540 1000L500 1020Z" fill="#aab4b4"/>
<path d="M400 600L440 590L470 980L430 990Z" fill="#9aa6a6"/>
<path d="M740 560H1100V1000H740Z" fill="#5e6e72"/>
<path d="M200 345L1050 405V450L200 390Z" fill="#f0801a"/>
<path d="M360 420L530 440L520 520L370 480Z" fill="#ea3550"/>
<path d="M720 470Q860 600 830 700L770 880L730 860L770 680L700 560Z" fill="#ea3550"/>
<path d="M515 420L720 440L735 960L550 985Z" fill="#e6ee22"/>
<path d="M560 440L610 620L650 440Z" fill="#ea3550"/>
<path d="M540 700L720 690V740L540 750Z" fill="#b0b8b0"/>
<rect x="585" y="620" width="65" height="70" fill="#15181c"/>
<ellipse cx="610" cy="310" rx="52" ry="82" fill="#c99a7e"/>
<path d="M560 280Q560 190 620 195Q665 205 660 290Q630 230 560 280Z" fill="#3a3030"/>
<rect x="585" y="385" width="50" height="50" fill="#c08c70"/>
</g></g></g>
<path d="M0 1145.5A11.5 11.5 0 0 0 11.5 1157H91V1158H0Z" fill="#bcc8c4"/>
<rect x="11" y="1157" width="80" height="1" fill="#4f4766"/>
<path d="M2048 1141.5A16.5 16.5 0 0 1 2031.5 1158H2048Z" fill="#1b3037"/>
<rect x="1379.65" y="14.95" width="82.1" height="80.9" fill="none" stroke="#e02200" stroke-width="3.5"/>
<rect x="962.6" y="130.55" width="259.5" height="70.2" fill="none" stroke="#e02200" stroke-width="3.5"/>
</svg>
</div>
</body>
</html>
